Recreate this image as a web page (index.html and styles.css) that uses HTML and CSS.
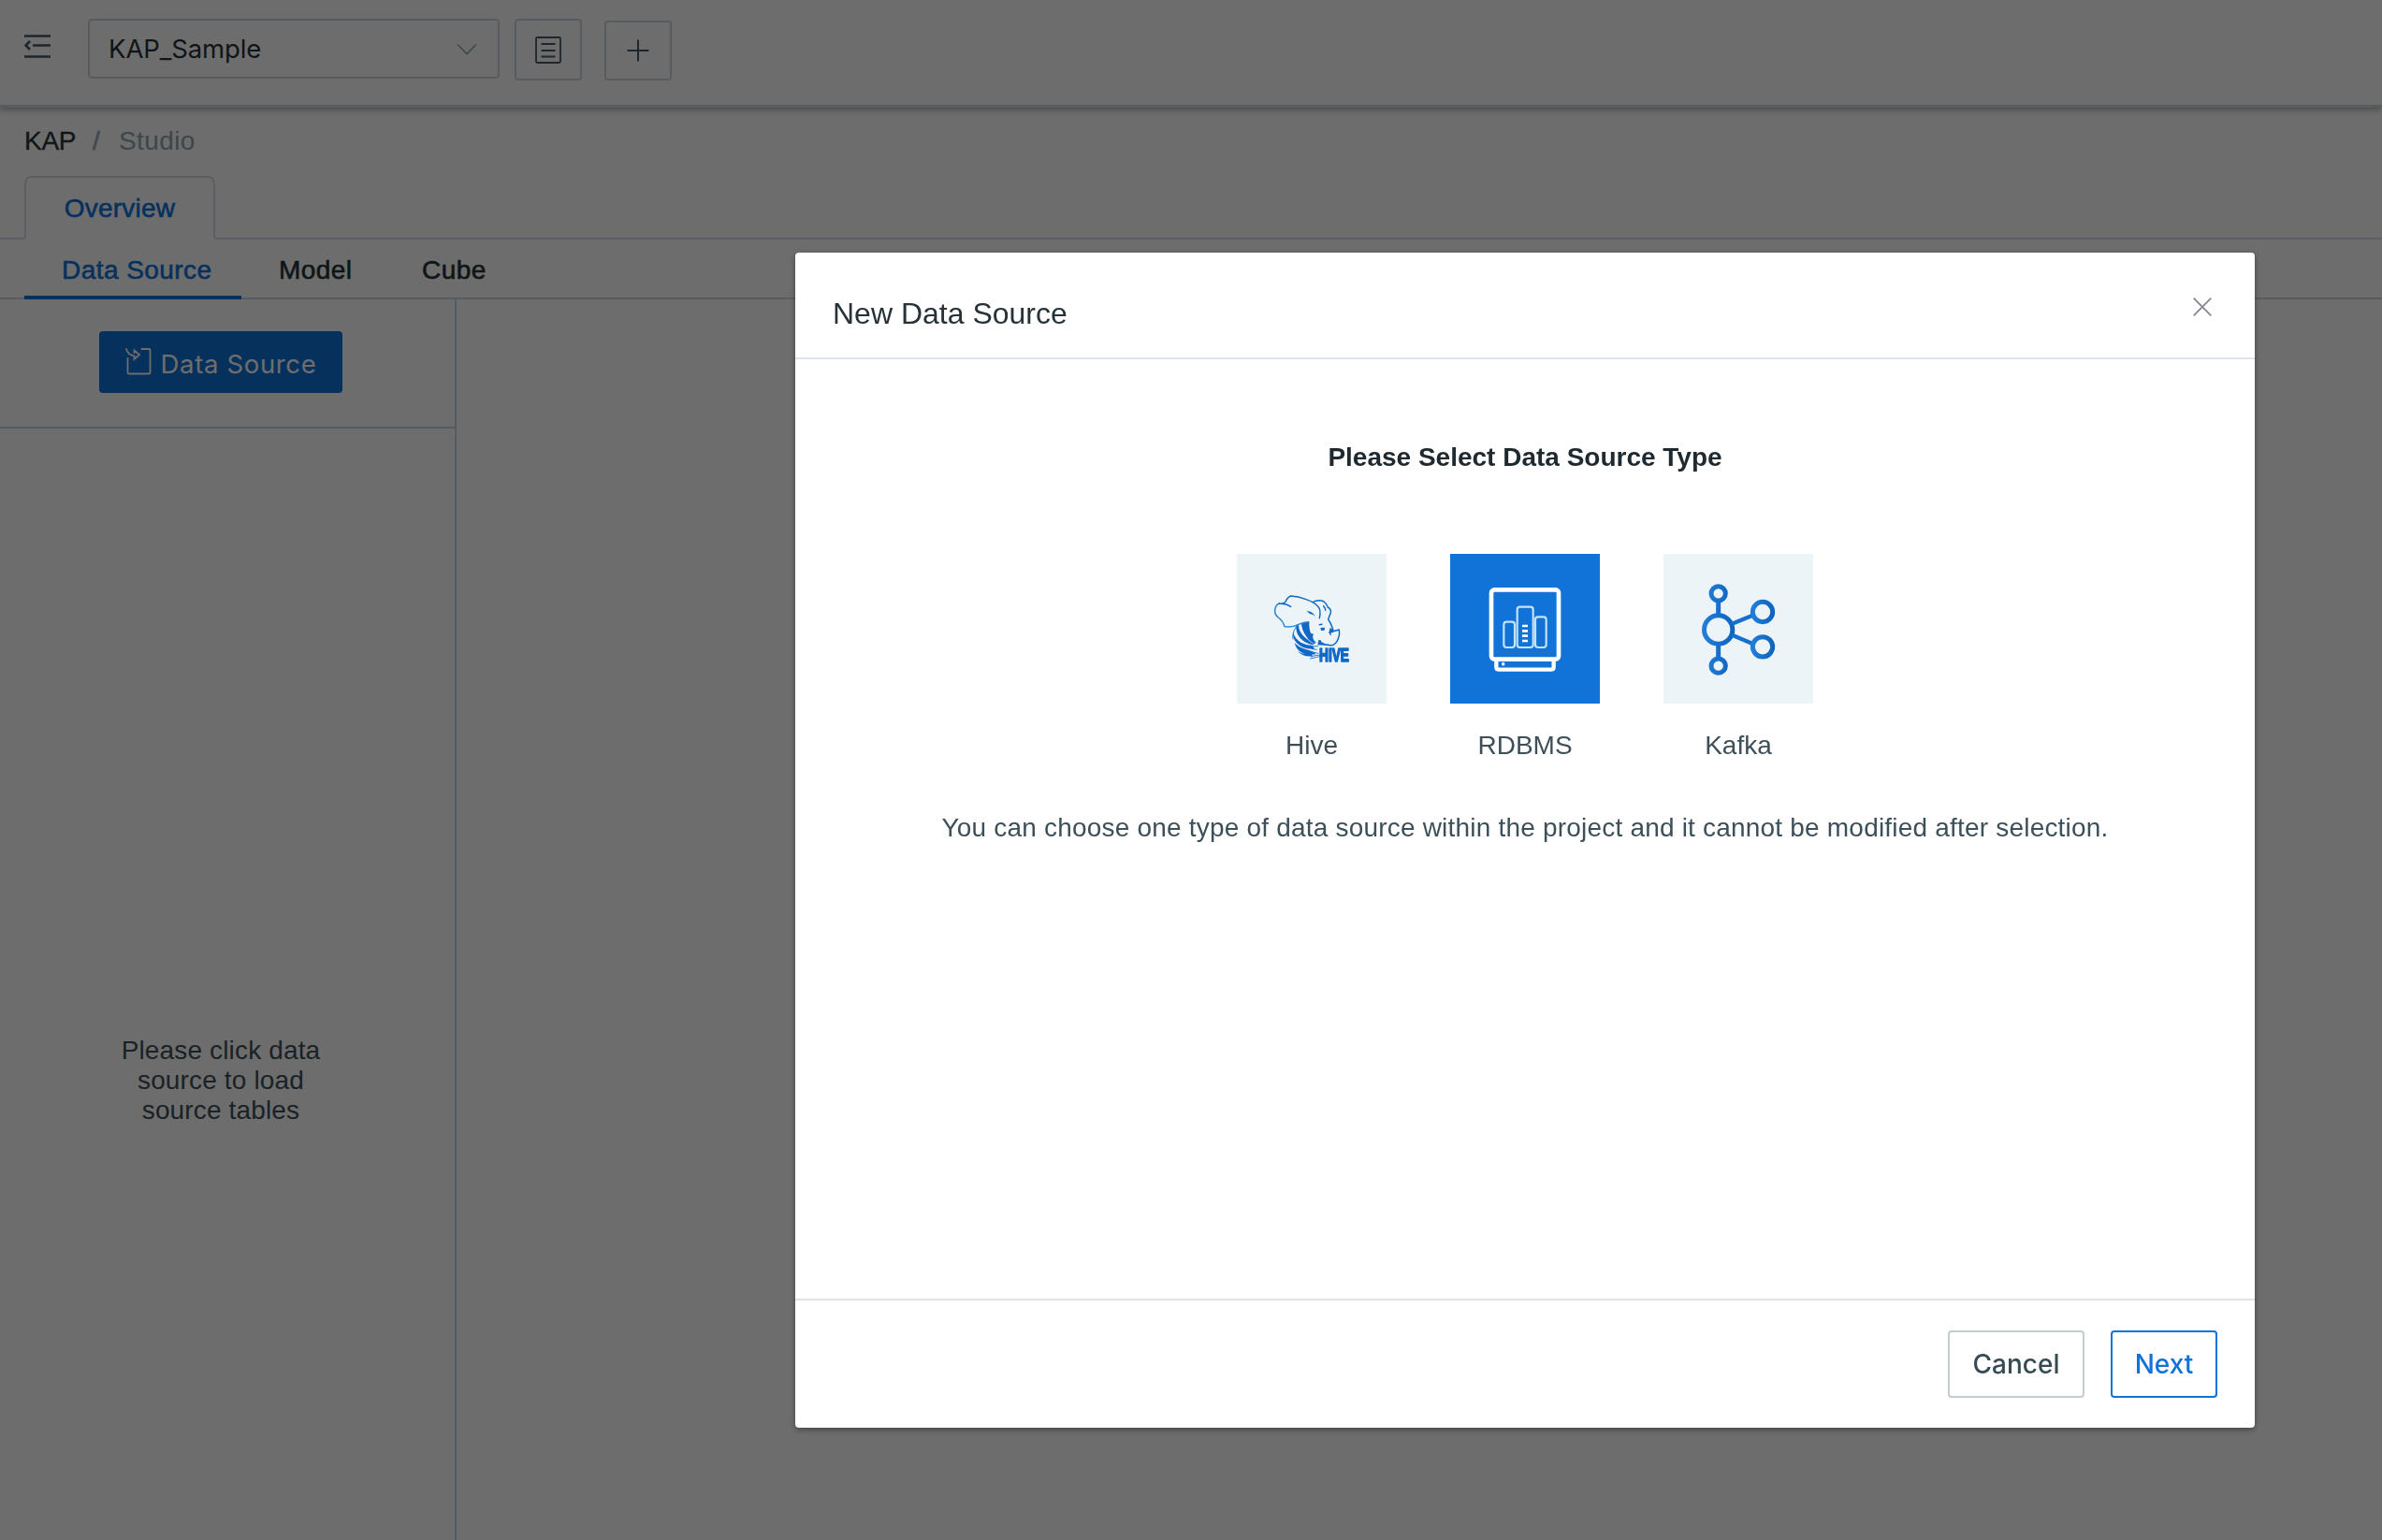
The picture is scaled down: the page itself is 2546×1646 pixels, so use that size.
FILE: index.html
```html
<!DOCTYPE html>
<html lang="en">
<head>
<meta charset="utf-8">
<title>KAP Studio</title>
<link rel="stylesheet" href="styles.css">
</head>
<body>
<div class="app">
  <header class="topbar">
    <svg class="menu-icon" width="28" height="26" viewBox="0 0 28 26" fill="none" stroke="#455a64" stroke-width="2.6"><path d="M0 1.5H28M9 11.5H28M0 23.5H28M6 7L1.5 11.5L6 16"/></svg>
    <div class="select"><span class="select-value">KAP_Sample</span>
      <svg width="22" height="13" viewBox="0 0 22 13" fill="none" stroke="#90a4ae" stroke-width="1.6"><path d="M1 1.5L11 11.5L21 1.5"/></svg>
    </div>
    <button class="square list-btn"><svg width="28" height="29" viewBox="0 0 28 29" fill="none" stroke="#455a64" stroke-width="1.8"><rect x="1" y="1" width="26" height="27" rx="1.5"/><path d="M6.5 8H21.500M6.500 15H21.500M6.500 21.500H21.500" stroke-width="2"/></svg></button>
    <button class="square plus-btn"><svg width="24" height="24" viewBox="0 0 24 24" fill="none" stroke="#455a64" stroke-width="2"><path d="M12 0.500V23.500M.500 12H23.500"/></svg></button>
  </header>
  <nav class="breadcrumb"><span class="crumb">KAP</span><span class="slash">/</span><span class="current">Studio</span></nav>
  <div class="tabs"><div class="tab">Overview</div></div>
  <div class="subtabs"><div class="subtab active">Data Source</div><div class="subtab model">Model</div><div class="subtab cube">Cube</div></div>
  <main class="workspace">
    <aside class="sidebar">
      <div class="sidebar-top">
        <button class="source-btn"><svg width="28" height="30" viewBox="0 0 28 30" fill="none" stroke="#fff" stroke-width="1.8" stroke-linecap="round"><path d="M17.500 2H25Q26.500 2 26.500 3.500V27Q26.500 28.500 25 28.500H4Q2.500 28.500 2.500 27V12M1 2Q2.500 8 9.500 9.500V13L15 8L9.500 3.500V6"/></svg><span>Data Source</span></button>
      </div>
      <p class="empty">Please click data<br>source to load<br>source tables</p>
    </aside>
  </main>
</div>
<div class="mask"></div>
<section class="modal">
  <header class="modal-header"><h1>New Data Source</h1>
    <svg class="close" width="20" height="20" viewBox="0 0 20 20" stroke="#86868f" stroke-width="1.800"><path d="M.7.700L19.300 19.300M19.300.700L.700 19.300"/></svg>
  </header>
  <div class="modal-body">
    <h2>Please Select Data Source Type</h2>
    <div class="types">
      <div class="type"><div class="tile">
        <svg width="160" height="160" viewBox="66 66 480 480" fill="none" stroke="#1168c5" stroke-width="4.500" stroke-linejoin="round" stroke-linecap="round">
          <path stroke="#2b86d9" d="M202 225Q190 229 188 246Q187 261 199 270Q214 281 219 299L233 300Q248 300 264 292Q280 284 296 284"/>
          <path d="M202 225Q215 227 222 220Q228 205 239 201Q262 202 288 212Q319 223 329 238Q334 246 333 259L331 272M202 226Q222 223 239 235M309 221Q328 211 345 219Q354 226 358 237Q369 244 367 254L359 276Q367 287 372 302L376 314L394 309Q397 325 391 338Q383 358 370 359Q351 360 333 349M344 233Q350 239 350 247M331 293L339 292M366 305V325M362 318L374 312"/>
          <path fill="#1168c5" stroke="none" d="M290 250Q309 247 319 270Q312 259 301 259Q296 254 290 250ZM334 303L348 302L347 311L336 312ZM325 358L328 343L334 342L341 355L352 360ZM362 309L374 306L375 319L366 318ZM273 290L298 284Q297 306 303 320L312 323Q305 334 317 347L316 354Q298 348 288 329Q275 311 273 290ZM256 296L264 294Q264 318 286 335Q303 350 316 358Q288 357 270 337Q254 319 256 296ZM247 316Q250 337 271 350Q290 360 309 360L315 371Q279 374 258 352Q242 335 247 316ZM251 351Q263 365 285 371Q300 376 313 380L319 388Q290 391 270 380Q256 371 251 351ZM260 378Q277 389 304 386L310 394Q280 398 260 378Z"/>
          <path d="M257 299Q242 319 246 339M309 355L319 350M307 363L326 362M307 371L322 373M315 382L327 385M304 396Q318 389 345 391M302 402Q325 394 352 394" stroke-width="2.500"/>
          <text class="hive-word" x="330" y="410" textLength="96" lengthAdjust="spacingAndGlyphs" fill="#1168c5" stroke-width="5">HIVE</text>
        </svg></div><span>Hive</span></div>
      <div class="type"><div class="tile selected">
        <svg width="160" height="160" viewBox="60 66 480 480" fill="none" stroke="#fff">
          <rect x="192" y="181" width="216" height="223" rx="10" stroke-width="14"/>
          <path stroke-width="13" d="M208 404V428Q208 437 217 437H383Q392 437 392 428V404"/>
          <g stroke="#c5e3f7" stroke-width="6.500"><rect x="232" y="284" width="35" height="82" rx="9"/><rect x="275" y="236" width="51" height="130" rx="9"/><rect x="333" y="268" width="35" height="98" rx="9"/></g>
          <path stroke-width="8" d="M291 297H309M291 313H309M291 329H309M291 345H309"/><circle cx="230" cy="419" r="5.500" fill="#d9edfa" stroke="none"/>
        </svg></div><span>RDBMS</span></div>
      <div class="type"><div class="tile">
        <svg width="160" height="160" viewBox="54 66 480 480" fill="none" stroke="url(#k)" stroke-width="15">
          <defs><linearGradient id="k" gradientUnits="userSpaceOnUse" x1="177" y1="0" x2="283" y2="0"><stop offset="0" stop-color="#2380da"/><stop offset="1" stop-color="#0e62bd"/></linearGradient><linearGradient id="k2" gradientUnits="userSpaceOnUse" x1="333" y1="0" x2="411" y2="0"><stop offset="0" stop-color="#2380da"/><stop offset="1" stop-color="#0e62bd"/></linearGradient></defs>
          <circle cx="230" cy="193" r="23"/><circle cx="230" cy="309" r="45.500"/><circle cx="230" cy="425" r="23"/><g fill="#1670cc" stroke="none"><rect x="222.500" y="216" width="15" height="47"/><rect x="222.500" y="355" width="15" height="47"/></g>
          <path stroke="#1670cc" stroke-width="13" d="M274 290L338 264M274 326L338 353"/>
          <g stroke="url(#k2)"><circle cx="372" cy="252" r="32"/><circle cx="372" cy="364" r="32"/></g>
        </svg></div><span>Kafka</span></div>
    </div>
    <p class="note">You can choose one type of data source within the project and it cannot be modified after selection.</p>
  </div>
  <footer class="modal-footer"><button class="cancel">Cancel</button><button class="next">Next</button></footer>
</section>
</body>
</html>
```

FILE: styles.css
```css
* { box-sizing: border-box; }
body { margin: 0; width: 2546px; height: 1646px; overflow: hidden; font: 28px/32px "Liberation Sans", Arial, sans-serif; color: #3d505a; background: #fff; }
button { font-family: Inter, sans-serif; padding: 0; background: none; border: 2px solid #cfd8dc; border-radius: 4px; display: flex; align-items: center; justify-content: center; }
h1, h2, p { margin: 0; font-weight: normal; }
svg { display: block; flex: none; }
.app { height: 1646px; display: flex; flex-direction: column; }
.topbar { height: 115px; flex: none; display: flex; align-items: flex-start; padding: 20px 26px 0; border-bottom: 3px solid #cfd8dc; box-shadow: 0 2px 7px rgba(0,0,0,.35); }
.menu-icon { margin-top: 17px; }
.select { width: 440px; height: 64px; margin-left: 40px; padding: 0 22px 0 20px; border: 2px solid #cfd8dc; border-radius: 4px; display: flex; align-items: center; justify-content: space-between; color: #263238; }
.select-value { font-family: Inter, sans-serif; font-size: 27.5px; letter-spacing: -.1px; }
.square { width: 72px; height: 66px; margin-left: 16px; }
.plus-btn { height: 64px; margin: 2px 0 0 24px; }
.breadcrumb { height: 73px; flex: none; padding: 20px 26px 0; display: flex; }
.crumb { color: #263238; width: 73px; letter-spacing: -.3px; -webkit-text-stroke: .3px; }
.slash { width: 28px; color: #97a8be; -webkit-text-stroke: .6px; }
.current { color: #90a4ae; letter-spacing: .4px; }
.tabs { height: 68px; flex: none; padding-left: 26px; border-bottom: 2px solid #dadde5; }
.tab { width: 204px; height: 68px; border: 2px solid #dadde5; border-bottom-color: #fff; border-radius: 8px 8px 0 0; text-align: center; line-height: 65px; letter-spacing: .2px; color: #0f73d9; -webkit-text-stroke: .6px; }
.subtabs { height: 64px; flex: none; padding-left: 26px; border-bottom: 2px solid #cfd8dc; display: flex; line-height: 65px; letter-spacing: .45px; color: #263238; -webkit-text-stroke: .6px; }
.subtab { height: 64px; }
.subtab.active { width: 232px; padding-left: 40px; border-bottom: 4px solid #0f73d9; color: #0f73d9; }
.model { width: 152px; padding-left: 40px; }
.cube { padding-left: 41px; }
.workspace { flex: 1; display: flex; }
.sidebar { width: 488px; border-right: 2px solid #cfd8dc; }
.sidebar-top { height: 138px; padding: 34px 0 0 106px; border-bottom: 2px solid #cfd8dc; }
.source-btn { width: 260px; height: 66px; border: 0; background: #0f73d9; color: #fff; font-size: 27.5px; gap: 10px; letter-spacing: .65px; }
.source-btn svg { margin-top: -3px; }
.source-btn span { margin-top: 3px; }
.empty { margin-top: 649px; width: 472px; text-align: center; letter-spacing: .15px; }
.mask { position: fixed; inset: 0; background: rgba(0,0,0,.573); }
.modal { position: fixed; left: 850px; top: 270px; width: 1560px; height: 1256px; display: flex; flex-direction: column; background: #fff; border-radius: 4px; box-shadow: 0 2px 6px rgba(0,0,0,.4); }
.modal-header { height: 114px; flex: none; padding: 48px 46px 0 40px; border-bottom: 2px solid #dfe3eb; display: flex; justify-content: space-between; }
h1 { margin-top: -1px; font-size: 32px; line-height: 36px; color: #263238; }
.modal-body { flex: 1; padding-top: 89px; display: flex; flex-direction: column; align-items: center; }
h2 { font-weight: bold; font-size: 28px; line-height: 32px; color: #1f2a30; }
.types { margin-top: 87px; display: flex; gap: 68px; }
.type { width: 160px; display: flex; flex-direction: column; align-items: center; gap: 29px; }
.tile { width: 160px; height: 160px; background: #ecf4f8; }
.tile.selected { background: #1173d8; }
.hive-word { font: bold 60px "Liberation Sans", Arial, sans-serif; }
.note { margin-top: 56px; white-space: nowrap; letter-spacing: .2px; }
.modal-footer { height: 138px; flex: none; padding: 32px 40px 0; border-top: 2px solid #dfe3eb; display: flex; justify-content: flex-end; gap: 28px; }
.modal-footer button { height: 72px; font-size: 28px; font-weight: 500; border-color: #c3ced3; color: #374b55; }
.modal-footer .cancel { width: 146px; }
.modal-footer .next { width: 114px; border-color: #0f73d9; color: #0f73d9; }
```
